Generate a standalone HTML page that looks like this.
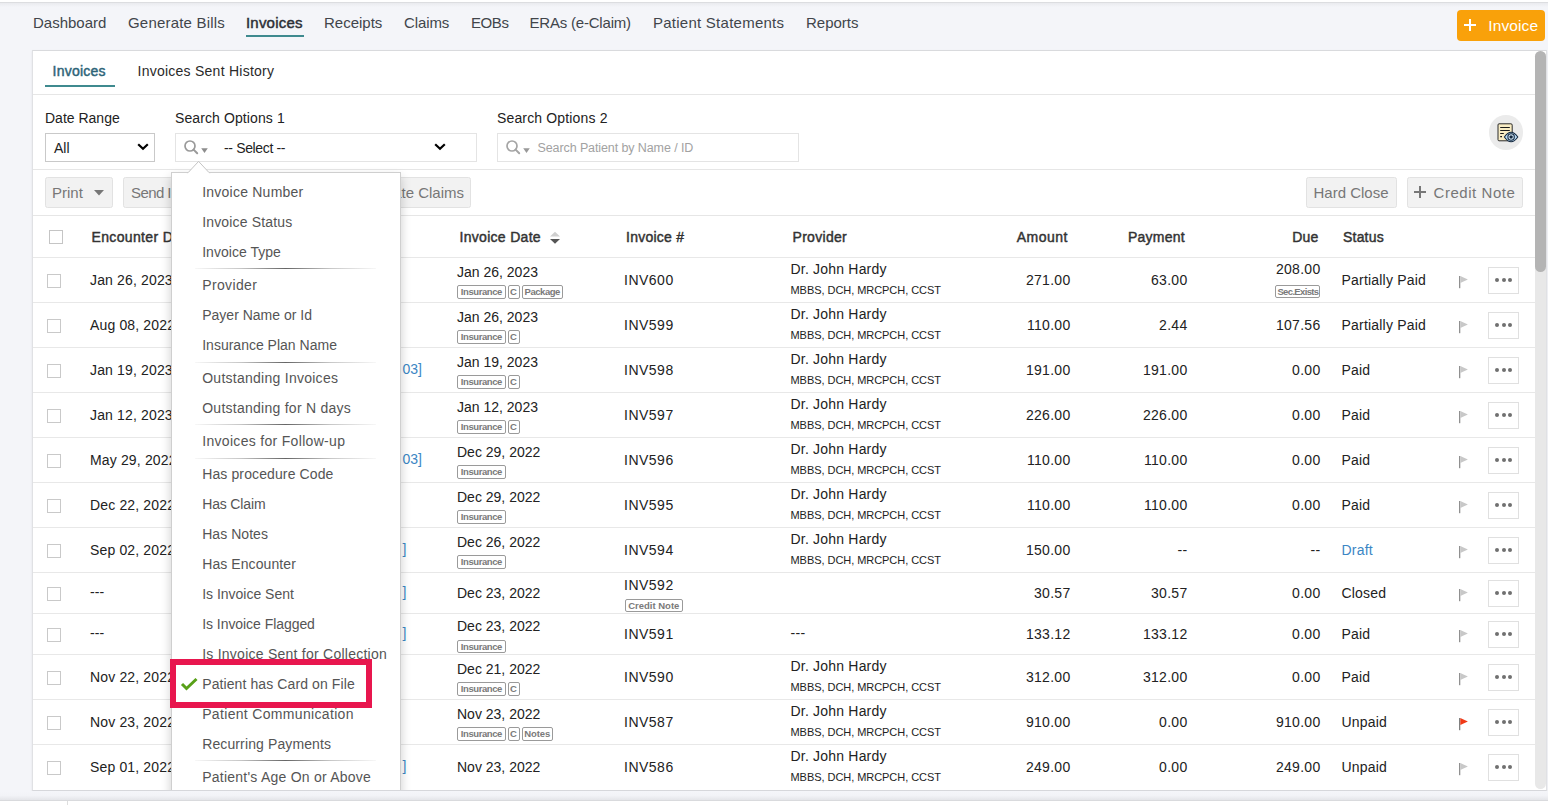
<!DOCTYPE html>
<html><head><meta charset="utf-8"><title>Invoices</title>
<style>
html,body{margin:0;padding:0}
body{width:1548px;height:805px;overflow:hidden;position:relative;background:#f4f5f9;font-family:"Liberation Sans",sans-serif;}
.a{position:absolute}
.t{position:absolute;white-space:nowrap;line-height:1}
.bd{position:absolute;height:13.5px;box-sizing:border-box;border:1px solid #9a9a9a;border-radius:2px;font-size:9.5px;line-height:11.5px;color:#7a7a7a;font-weight:bold;text-align:center;background:#fff;white-space:nowrap;overflow:visible}
</style></head><body>
<div class="a" style="left:0px;top:0px;width:1548px;height:2px;background:#fff"></div>
<div class="a" style="left:0px;top:2px;width:1548px;height:1px;background:#dcdde0"></div>
<div class="a" style="left:0px;top:3px;width:1548px;height:4px;background:linear-gradient(#eaebef,#f4f5f9)"></div>
<div class="t" style="left:33px;top:15.10px;font-size:15px;color:#41454b;font-weight:normal;letter-spacing:0px;">Dashboard</div>
<div class="t" style="left:128px;top:15.10px;font-size:15px;color:#41454b;font-weight:normal;letter-spacing:0.2px;">Generate Bills</div>
<div class="t" style="left:246px;top:15.10px;font-size:15px;color:#2b2f36;font-weight:normal;-webkit-text-stroke:0.45px #2b2f36;letter-spacing:0.2px;">Invoices</div>
<div class="t" style="left:324px;top:15.10px;font-size:15px;color:#41454b;font-weight:normal;letter-spacing:0px;">Receipts</div>
<div class="t" style="left:404px;top:15.10px;font-size:15px;color:#41454b;font-weight:normal;letter-spacing:-0.1px;">Claims</div>
<div class="t" style="left:471px;top:15.10px;font-size:15px;color:#41454b;font-weight:normal;letter-spacing:-0.4px;">EOBs</div>
<div class="t" style="left:529.5px;top:15.10px;font-size:15px;color:#41454b;font-weight:normal;letter-spacing:-0.2px;">ERAs (e-Claim)</div>
<div class="t" style="left:653px;top:15.10px;font-size:15px;color:#41454b;font-weight:normal;letter-spacing:0.25px;">Patient Statements</div>
<div class="t" style="left:806px;top:15.10px;font-size:15px;color:#41454b;font-weight:normal;letter-spacing:0px;">Reports</div>
<div class="a" style="left:246px;top:35px;width:58px;height:2px;background:#3f8a8f"></div>
<div class="a" style="left:1457px;top:10px;width:88px;height:31px;background:#f9a10a;border-radius:4px;"></div>
<div class="a" style="left:1464px;top:24px;width:12px;height:2px;background:#fff"></div>
<div class="a" style="left:1469px;top:19px;width:2px;height:12px;background:#fff"></div>
<div class="t" style="left:1488.3px;top:17.78px;font-size:15.5px;color:#fff;font-weight:normal;letter-spacing:0.1px;">Invoice</div>
<div class="a" style="left:32px;top:50px;width:1515px;height:741px;background:#fff;border:1px solid #e0e1e4;border-top-color:#d9dadd;border-bottom-color:#d6d7db;box-sizing:border-box;box-shadow:0 1px 2px rgba(0,0,0,0.08)"></div>
<div class="t" style="left:52.5px;top:63.75px;font-size:14px;color:#2d6478;font-weight:normal;-webkit-text-stroke:0.45px #2d6478;letter-spacing:0.25px;">Invoices</div>
<div class="t" style="left:137.5px;top:63.75px;font-size:14px;color:#2a2a2a;font-weight:normal;letter-spacing:0.25px;">Invoices Sent History</div>
<div class="a" style="left:45px;top:85px;width:70px;height:2px;background:#3f8a8f"></div>
<div class="a" style="left:33px;top:94px;width:1502px;height:1px;background:#e6e6e6"></div>
<div class="t" style="left:45px;top:111.45px;font-size:14px;color:#222;font-weight:normal;">Date Range</div>
<div class="a" style="left:45px;top:133px;width:110px;height:29px;border:1px solid #c9c9c9;box-sizing:border-box;background:#fff"></div>
<div class="t" style="left:54px;top:141.15px;font-size:14px;color:#222;font-weight:normal;">All</div>
<svg class="a" style="left:136.5px;top:142.8px" width="12" height="8" viewBox="0 0 12 8"><path d="M1.2 1.2 L6 5.8 L10.8 1.2" fill="none" stroke="#000" stroke-width="2.2"/></svg>
<div class="t" style="left:175px;top:111.45px;font-size:14px;color:#222;font-weight:normal;letter-spacing:0.1px;">Search Options 1</div>
<div class="a" style="left:175px;top:133px;width:302px;height:29px;border:1px solid #e4e4e4;box-sizing:border-box;background:#fff"></div>
<svg class="a" style="left:184px;top:140px" width="26" height="16" viewBox="0 0 26 16"><circle cx="6" cy="6" r="5" fill="none" stroke="#9a9a9a" stroke-width="1.7"/><path d="M9.6 9.6 L13.2 13.2" stroke="#9a9a9a" stroke-width="2" stroke-linecap="round"/><path d="M17.2 8.2 L23.8 8.2 L20.5 13 Z" fill="#8d8d8d"/></svg>
<div class="t" style="left:224px;top:141.15px;font-size:14px;color:#222;font-weight:normal;letter-spacing:-0.35px;">-- Select --</div>
<svg class="a" style="left:433.5px;top:142.8px" width="12" height="8" viewBox="0 0 12 8"><path d="M1.2 1.2 L6 5.8 L10.8 1.2" fill="none" stroke="#000" stroke-width="2.2"/></svg>
<div class="t" style="left:497px;top:111.45px;font-size:14px;color:#222;font-weight:normal;letter-spacing:0.15px;">Search Options 2</div>
<div class="a" style="left:497px;top:133px;width:302px;height:29px;border:1px solid #e4e4e4;box-sizing:border-box;background:#fff"></div>
<svg class="a" style="left:506px;top:140px" width="26" height="16" viewBox="0 0 26 16"><circle cx="6" cy="6" r="5" fill="none" stroke="#a5a5a5" stroke-width="1.7"/><path d="M9.6 9.6 L13.2 13.2" stroke="#a5a5a5" stroke-width="2" stroke-linecap="round"/><path d="M17.2 8.2 L23.8 8.2 L20.5 13 Z" fill="#999"/></svg>
<div class="t" style="left:537.5px;top:141.92px;font-size:12.5px;color:#a2a2a2;font-weight:normal;letter-spacing:-0.1px;">Search Patient by Name / ID</div>
<div class="a" style="left:1488.5px;top:115px;width:34.5px;height:34.5px;border-radius:50%;background:#ebebeb"></div>
<svg class="a" style="left:1488px;top:115px" width="36" height="36" viewBox="0 0 36 36">
<path d="M11 8.8 H22.9 Q24.2 8.8 24.2 10.2 V24.7 Q24.2 25.8 22.9 25.8 H11 Q10 25.8 10 24.7 V10 Q10 8.8 11 8.8 Z" fill="#f9edc4" stroke="#2a2a2a" stroke-width="1"/>
<path d="M12.2 12.4 H21.8 M12.2 15.5 H21.8 M12.2 18.5 H15.8 M12.2 21.6 H14" stroke="#1a1a1a" stroke-width="1.05"/>
<path d="M16.4 22 Q23.1 12.4 29.8 22 Q23.1 31.6 16.4 22 Z" fill="#b9dbf6" stroke="#12263d" stroke-width="1.05"/>
<circle cx="23.1" cy="22" r="3.2" fill="#d6eafa" stroke="#12263d" stroke-width="1.1"/>
<rect x="21.6" y="20.5" width="3" height="3" rx="0.8" fill="#12263d"/>
</svg>
<div class="a" style="left:33px;top:169px;width:1502px;height:1px;background:#e6e6e6"></div>
<div class="a" style="left:45px;top:177px;width:68px;height:31px;background:#f2f2f2;border:1px solid #e2e2e2;border-radius:2.5px;box-sizing:border-box"></div>
<div class="t" style="left:52px;top:185.10px;font-size:15px;color:#777;font-weight:normal;">Print</div>
<svg class="a" style="left:93px;top:189px" width="12" height="8" viewBox="0 0 12 8"><path d="M1 1 H11 L6 6.5 Z" fill="#777"/></svg>
<div class="a" style="left:123px;top:177px;width:120px;height:31px;background:#f2f2f2;border:1px solid #e2e2e2;border-radius:2.5px;box-sizing:border-box"></div>
<div class="t" style="left:131px;top:185.10px;font-size:15px;color:#777;font-weight:normal;letter-spacing:-0.6px;">Send Invoices</div>
<div class="a" style="left:250px;top:177px;width:221px;height:31px;background:#f2f2f2;border:1px solid #e2e2e2;border-radius:2.5px;box-sizing:border-box"></div>
<div class="t" style="left:351.5px;top:185.10px;font-size:15px;color:#777;font-weight:normal;letter-spacing:0px;">Generate Claims</div>
<div class="a" style="left:1306px;top:177px;width:91px;height:31px;background:#f2f2f2;border:1px solid #e2e2e2;border-radius:2.5px;box-sizing:border-box"></div>
<div class="t" style="left:1313.5px;top:185.10px;font-size:15px;color:#777;font-weight:normal;">Hard Close</div>
<div class="a" style="left:1407px;top:177px;width:116px;height:31px;background:#f2f2f2;border:1px solid #e2e2e2;border-radius:2.5px;box-sizing:border-box"></div>
<div class="a" style="left:1414px;top:191px;width:12px;height:2px;background:#777"></div>
<div class="a" style="left:1419px;top:186px;width:2px;height:12px;background:#777"></div>
<div class="t" style="left:1433.5px;top:185.10px;font-size:15px;color:#777;font-weight:normal;letter-spacing:0.55px;">Credit Note</div>
<div class="a" style="left:33px;top:215px;width:1502px;height:1px;background:#e6e6e6"></div>
<div class="a" style="left:49px;top:230px;width:14px;height:14px;border:1px solid #c5c5c5;box-sizing:border-box;background:#fff"></div>
<div class="t" style="left:91.5px;top:230.25px;font-size:14px;color:#333;font-weight:normal;-webkit-text-stroke:0.45px #333;letter-spacing:0.35px;">Encounter Date</div>
<div class="t" style="left:459.5px;top:230.25px;font-size:14px;color:#333;font-weight:normal;-webkit-text-stroke:0.45px #333;letter-spacing:0.3px;">Invoice Date</div>
<svg class="a" style="left:549px;top:231px" width="12" height="14" viewBox="0 0 12 14"><path d="M1 5.5 L6 0.8 L11 5.5 Z" fill="#cfcfcf"/><path d="M1 8 L11 8 L6 12.7 Z" fill="#555"/></svg>
<div class="t" style="left:626px;top:230.25px;font-size:14px;color:#333;font-weight:normal;-webkit-text-stroke:0.45px #333;letter-spacing:0.25px;">Invoice #</div>
<div class="t" style="left:792.5px;top:230.25px;font-size:14px;color:#333;font-weight:normal;-webkit-text-stroke:0.45px #333;letter-spacing:0.3px;">Provider</div>
<div class="t" style="right:480px;top:230.25px;font-size:14px;color:#333;font-weight:normal;-webkit-text-stroke:0.45px #333;letter-spacing:0.5px;">Amount</div>
<div class="t" style="right:363px;top:230.25px;font-size:14px;color:#333;font-weight:normal;-webkit-text-stroke:0.45px #333;letter-spacing:0.25px;">Payment</div>
<div class="t" style="right:229.5px;top:230.25px;font-size:14px;color:#333;font-weight:normal;-webkit-text-stroke:0.45px #333;letter-spacing:0.2px;">Due</div>
<div class="t" style="left:1343px;top:230.25px;font-size:14px;color:#333;font-weight:normal;-webkit-text-stroke:0.45px #333;letter-spacing:0.2px;">Status</div>
<div class="a" style="left:33px;top:257px;width:1502px;height:1px;background:#e8e8e8"></div>
<div class="a" style="left:33px;top:302px;width:1502px;height:1px;background:#e8e8e8"></div>
<div class="a" style="left:33px;top:347px;width:1502px;height:1px;background:#e8e8e8"></div>
<div class="a" style="left:33px;top:392px;width:1502px;height:1px;background:#e8e8e8"></div>
<div class="a" style="left:33px;top:437px;width:1502px;height:1px;background:#e8e8e8"></div>
<div class="a" style="left:33px;top:482px;width:1502px;height:1px;background:#e8e8e8"></div>
<div class="a" style="left:33px;top:527px;width:1502px;height:1px;background:#e8e8e8"></div>
<div class="a" style="left:33px;top:572px;width:1502px;height:1px;background:#e8e8e8"></div>
<div class="a" style="left:33px;top:613px;width:1502px;height:1px;background:#e8e8e8"></div>
<div class="a" style="left:33px;top:654px;width:1502px;height:1px;background:#e8e8e8"></div>
<div class="a" style="left:33px;top:699px;width:1502px;height:1px;background:#e8e8e8"></div>
<div class="a" style="left:33px;top:744px;width:1502px;height:1px;background:#e8e8e8"></div>
<div class="a" style="left:47px;top:274px;width:14px;height:14px;border:1px solid #c9c9c9;box-sizing:border-box;background:#fff"></div>
<div class="t" style="left:90px;top:272.85px;font-size:14px;color:#222;font-weight:normal;letter-spacing:0.15px;">Jan 26, 2023</div>
<div class="t" style="left:457px;top:265.15px;font-size:14px;color:#222;font-weight:normal;letter-spacing:0px;">Jan 26, 2023</div>
<div class="bd" style="left:457px;top:285px;width:48.5px;letter-spacing:-0.43px;text-indent:0.21px">Insurance</div><div class="bd" style="left:507.5px;top:285px;width:12px;letter-spacing:0px;text-indent:0.00px">C</div><div class="bd" style="left:521.5px;top:285px;width:41.3px;letter-spacing:-0.46px;text-indent:0.23px">Package</div>
<div class="t" style="left:624px;top:272.85px;font-size:14px;color:#222;font-weight:normal;letter-spacing:0.5px;">INV600</div>
<div class="t" style="left:790.5px;top:262.15px;font-size:14px;color:#222;font-weight:normal;letter-spacing:0.2px;">Dr. John Hardy</div>
<div class="t" style="left:790.5px;top:285.19px;font-size:11px;color:#222;font-weight:normal;letter-spacing:-0.05px;">MBBS, DCH, MRCPCH, CCST</div>
<div class="t" style="right:477.5px;top:272.85px;font-size:14px;color:#222;font-weight:normal;letter-spacing:0.3px;">271.00</div>
<div class="t" style="right:360.5px;top:272.85px;font-size:14px;color:#222;font-weight:normal;letter-spacing:0.3px;">63.00</div>
<div class="t" style="right:227.5px;top:262.45px;font-size:14px;color:#222;font-weight:normal;letter-spacing:0.3px;">208.00</div>
<div class="bd" style="left:1275.2px;top:284.6px;width:45.2px;letter-spacing:-0.65px;text-indent:0.33px">Sec.Exists</div>
<div class="t" style="left:1341.5px;top:272.85px;font-size:14px;color:#222;font-weight:normal;letter-spacing:0.2px;">Partially Paid</div>
<svg class="a" style="left:1458.9px;top:276px" width="10" height="13" viewBox="0 0 10 13"><rect x="0" y="0" width="1.3" height="12.2" fill="#909090"/><path d="M1.3 0 L8.9 3.5 L1.3 7 Z" fill="#c8c8c8"/></svg>
<div class="a" style="left:1488px;top:267px;width:31px;height:27px;border:1px solid #e0e0e0;box-sizing:border-box;background:#fff"></div>
<div class="a" style="left:1495.2px;top:278px;width:4.2px;height:4.2px;border-radius:50%;background:#707070"></div>
<div class="a" style="left:1501.6px;top:278px;width:4.2px;height:4.2px;border-radius:50%;background:#707070"></div>
<div class="a" style="left:1508px;top:278px;width:4.2px;height:4.2px;border-radius:50%;background:#707070"></div>
<div class="a" style="left:47px;top:319px;width:14px;height:14px;border:1px solid #c9c9c9;box-sizing:border-box;background:#fff"></div>
<div class="t" style="left:90px;top:317.85px;font-size:14px;color:#222;font-weight:normal;letter-spacing:0.15px;">Aug 08, 2022</div>
<div class="t" style="left:457px;top:310.15px;font-size:14px;color:#222;font-weight:normal;letter-spacing:0px;">Jan 26, 2023</div>
<div class="bd" style="left:457px;top:330px;width:48.5px;letter-spacing:-0.43px;text-indent:0.21px">Insurance</div><div class="bd" style="left:507.5px;top:330px;width:12px;letter-spacing:0px;text-indent:0.00px">C</div>
<div class="t" style="left:624px;top:317.85px;font-size:14px;color:#222;font-weight:normal;letter-spacing:0.5px;">INV599</div>
<div class="t" style="left:790.5px;top:307.15px;font-size:14px;color:#222;font-weight:normal;letter-spacing:0.2px;">Dr. John Hardy</div>
<div class="t" style="left:790.5px;top:330.19px;font-size:11px;color:#222;font-weight:normal;letter-spacing:-0.05px;">MBBS, DCH, MRCPCH, CCST</div>
<div class="t" style="right:477.5px;top:317.85px;font-size:14px;color:#222;font-weight:normal;letter-spacing:0.3px;">110.00</div>
<div class="t" style="right:360.5px;top:317.85px;font-size:14px;color:#222;font-weight:normal;letter-spacing:0.3px;">2.44</div>
<div class="t" style="right:227.5px;top:317.85px;font-size:14px;color:#222;font-weight:normal;letter-spacing:0.3px;">107.56</div>
<div class="t" style="left:1341.5px;top:317.85px;font-size:14px;color:#222;font-weight:normal;letter-spacing:0.2px;">Partially Paid</div>
<svg class="a" style="left:1458.9px;top:321px" width="10" height="13" viewBox="0 0 10 13"><rect x="0" y="0" width="1.3" height="12.2" fill="#909090"/><path d="M1.3 0 L8.9 3.5 L1.3 7 Z" fill="#c8c8c8"/></svg>
<div class="a" style="left:1488px;top:312px;width:31px;height:27px;border:1px solid #e0e0e0;box-sizing:border-box;background:#fff"></div>
<div class="a" style="left:1495.2px;top:323px;width:4.2px;height:4.2px;border-radius:50%;background:#707070"></div>
<div class="a" style="left:1501.6px;top:323px;width:4.2px;height:4.2px;border-radius:50%;background:#707070"></div>
<div class="a" style="left:1508px;top:323px;width:4.2px;height:4.2px;border-radius:50%;background:#707070"></div>
<div class="a" style="left:47px;top:364px;width:14px;height:14px;border:1px solid #c9c9c9;box-sizing:border-box;background:#fff"></div>
<div class="t" style="left:90px;top:362.85px;font-size:14px;color:#222;font-weight:normal;letter-spacing:0.15px;">Jan 19, 2023</div>
<div class="t" style="right:1126px;top:362.35px;font-size:14px;color:#3b86c4;font-weight:normal;">03]</div>
<div class="t" style="left:457px;top:355.15px;font-size:14px;color:#222;font-weight:normal;letter-spacing:0px;">Jan 19, 2023</div>
<div class="bd" style="left:457px;top:375px;width:48.5px;letter-spacing:-0.43px;text-indent:0.21px">Insurance</div><div class="bd" style="left:507.5px;top:375px;width:12px;letter-spacing:0px;text-indent:0.00px">C</div>
<div class="t" style="left:624px;top:362.85px;font-size:14px;color:#222;font-weight:normal;letter-spacing:0.5px;">INV598</div>
<div class="t" style="left:790.5px;top:352.15px;font-size:14px;color:#222;font-weight:normal;letter-spacing:0.2px;">Dr. John Hardy</div>
<div class="t" style="left:790.5px;top:375.19px;font-size:11px;color:#222;font-weight:normal;letter-spacing:-0.05px;">MBBS, DCH, MRCPCH, CCST</div>
<div class="t" style="right:477.5px;top:362.85px;font-size:14px;color:#222;font-weight:normal;letter-spacing:0.3px;">191.00</div>
<div class="t" style="right:360.5px;top:362.85px;font-size:14px;color:#222;font-weight:normal;letter-spacing:0.3px;">191.00</div>
<div class="t" style="right:227.5px;top:362.85px;font-size:14px;color:#222;font-weight:normal;letter-spacing:0.3px;">0.00</div>
<div class="t" style="left:1341.5px;top:362.85px;font-size:14px;color:#222;font-weight:normal;letter-spacing:0.2px;">Paid</div>
<svg class="a" style="left:1458.9px;top:366px" width="10" height="13" viewBox="0 0 10 13"><rect x="0" y="0" width="1.3" height="12.2" fill="#909090"/><path d="M1.3 0 L8.9 3.5 L1.3 7 Z" fill="#c8c8c8"/></svg>
<div class="a" style="left:1488px;top:357px;width:31px;height:27px;border:1px solid #e0e0e0;box-sizing:border-box;background:#fff"></div>
<div class="a" style="left:1495.2px;top:368px;width:4.2px;height:4.2px;border-radius:50%;background:#707070"></div>
<div class="a" style="left:1501.6px;top:368px;width:4.2px;height:4.2px;border-radius:50%;background:#707070"></div>
<div class="a" style="left:1508px;top:368px;width:4.2px;height:4.2px;border-radius:50%;background:#707070"></div>
<div class="a" style="left:47px;top:409px;width:14px;height:14px;border:1px solid #c9c9c9;box-sizing:border-box;background:#fff"></div>
<div class="t" style="left:90px;top:407.85px;font-size:14px;color:#222;font-weight:normal;letter-spacing:0.15px;">Jan 12, 2023</div>
<div class="t" style="left:457px;top:400.15px;font-size:14px;color:#222;font-weight:normal;letter-spacing:0px;">Jan 12, 2023</div>
<div class="bd" style="left:457px;top:420px;width:48.5px;letter-spacing:-0.43px;text-indent:0.21px">Insurance</div><div class="bd" style="left:507.5px;top:420px;width:12px;letter-spacing:0px;text-indent:0.00px">C</div>
<div class="t" style="left:624px;top:407.85px;font-size:14px;color:#222;font-weight:normal;letter-spacing:0.5px;">INV597</div>
<div class="t" style="left:790.5px;top:397.15px;font-size:14px;color:#222;font-weight:normal;letter-spacing:0.2px;">Dr. John Hardy</div>
<div class="t" style="left:790.5px;top:420.19px;font-size:11px;color:#222;font-weight:normal;letter-spacing:-0.05px;">MBBS, DCH, MRCPCH, CCST</div>
<div class="t" style="right:477.5px;top:407.85px;font-size:14px;color:#222;font-weight:normal;letter-spacing:0.3px;">226.00</div>
<div class="t" style="right:360.5px;top:407.85px;font-size:14px;color:#222;font-weight:normal;letter-spacing:0.3px;">226.00</div>
<div class="t" style="right:227.5px;top:407.85px;font-size:14px;color:#222;font-weight:normal;letter-spacing:0.3px;">0.00</div>
<div class="t" style="left:1341.5px;top:407.85px;font-size:14px;color:#222;font-weight:normal;letter-spacing:0.2px;">Paid</div>
<svg class="a" style="left:1458.9px;top:411px" width="10" height="13" viewBox="0 0 10 13"><rect x="0" y="0" width="1.3" height="12.2" fill="#909090"/><path d="M1.3 0 L8.9 3.5 L1.3 7 Z" fill="#c8c8c8"/></svg>
<div class="a" style="left:1488px;top:402px;width:31px;height:27px;border:1px solid #e0e0e0;box-sizing:border-box;background:#fff"></div>
<div class="a" style="left:1495.2px;top:413px;width:4.2px;height:4.2px;border-radius:50%;background:#707070"></div>
<div class="a" style="left:1501.6px;top:413px;width:4.2px;height:4.2px;border-radius:50%;background:#707070"></div>
<div class="a" style="left:1508px;top:413px;width:4.2px;height:4.2px;border-radius:50%;background:#707070"></div>
<div class="a" style="left:47px;top:454px;width:14px;height:14px;border:1px solid #c9c9c9;box-sizing:border-box;background:#fff"></div>
<div class="t" style="left:90px;top:452.85px;font-size:14px;color:#222;font-weight:normal;letter-spacing:0.15px;">May 29, 2022</div>
<div class="t" style="right:1126px;top:452.35px;font-size:14px;color:#3b86c4;font-weight:normal;">03]</div>
<div class="t" style="left:457px;top:445.15px;font-size:14px;color:#222;font-weight:normal;letter-spacing:0px;">Dec 29, 2022</div>
<div class="bd" style="left:457px;top:465px;width:48.5px;letter-spacing:-0.43px;text-indent:0.21px">Insurance</div>
<div class="t" style="left:624px;top:452.85px;font-size:14px;color:#222;font-weight:normal;letter-spacing:0.5px;">INV596</div>
<div class="t" style="left:790.5px;top:442.15px;font-size:14px;color:#222;font-weight:normal;letter-spacing:0.2px;">Dr. John Hardy</div>
<div class="t" style="left:790.5px;top:465.19px;font-size:11px;color:#222;font-weight:normal;letter-spacing:-0.05px;">MBBS, DCH, MRCPCH, CCST</div>
<div class="t" style="right:477.5px;top:452.85px;font-size:14px;color:#222;font-weight:normal;letter-spacing:0.3px;">110.00</div>
<div class="t" style="right:360.5px;top:452.85px;font-size:14px;color:#222;font-weight:normal;letter-spacing:0.3px;">110.00</div>
<div class="t" style="right:227.5px;top:452.85px;font-size:14px;color:#222;font-weight:normal;letter-spacing:0.3px;">0.00</div>
<div class="t" style="left:1341.5px;top:452.85px;font-size:14px;color:#222;font-weight:normal;letter-spacing:0.2px;">Paid</div>
<svg class="a" style="left:1458.9px;top:456px" width="10" height="13" viewBox="0 0 10 13"><rect x="0" y="0" width="1.3" height="12.2" fill="#909090"/><path d="M1.3 0 L8.9 3.5 L1.3 7 Z" fill="#c8c8c8"/></svg>
<div class="a" style="left:1488px;top:447px;width:31px;height:27px;border:1px solid #e0e0e0;box-sizing:border-box;background:#fff"></div>
<div class="a" style="left:1495.2px;top:458px;width:4.2px;height:4.2px;border-radius:50%;background:#707070"></div>
<div class="a" style="left:1501.6px;top:458px;width:4.2px;height:4.2px;border-radius:50%;background:#707070"></div>
<div class="a" style="left:1508px;top:458px;width:4.2px;height:4.2px;border-radius:50%;background:#707070"></div>
<div class="a" style="left:47px;top:499px;width:14px;height:14px;border:1px solid #c9c9c9;box-sizing:border-box;background:#fff"></div>
<div class="t" style="left:90px;top:497.85px;font-size:14px;color:#222;font-weight:normal;letter-spacing:0.15px;">Dec 22, 2022</div>
<div class="t" style="left:457px;top:490.15px;font-size:14px;color:#222;font-weight:normal;letter-spacing:0px;">Dec 29, 2022</div>
<div class="bd" style="left:457px;top:510px;width:48.5px;letter-spacing:-0.43px;text-indent:0.21px">Insurance</div>
<div class="t" style="left:624px;top:497.85px;font-size:14px;color:#222;font-weight:normal;letter-spacing:0.5px;">INV595</div>
<div class="t" style="left:790.5px;top:487.15px;font-size:14px;color:#222;font-weight:normal;letter-spacing:0.2px;">Dr. John Hardy</div>
<div class="t" style="left:790.5px;top:510.19px;font-size:11px;color:#222;font-weight:normal;letter-spacing:-0.05px;">MBBS, DCH, MRCPCH, CCST</div>
<div class="t" style="right:477.5px;top:497.85px;font-size:14px;color:#222;font-weight:normal;letter-spacing:0.3px;">110.00</div>
<div class="t" style="right:360.5px;top:497.85px;font-size:14px;color:#222;font-weight:normal;letter-spacing:0.3px;">110.00</div>
<div class="t" style="right:227.5px;top:497.85px;font-size:14px;color:#222;font-weight:normal;letter-spacing:0.3px;">0.00</div>
<div class="t" style="left:1341.5px;top:497.85px;font-size:14px;color:#222;font-weight:normal;letter-spacing:0.2px;">Paid</div>
<svg class="a" style="left:1458.9px;top:501px" width="10" height="13" viewBox="0 0 10 13"><rect x="0" y="0" width="1.3" height="12.2" fill="#909090"/><path d="M1.3 0 L8.9 3.5 L1.3 7 Z" fill="#c8c8c8"/></svg>
<div class="a" style="left:1488px;top:492px;width:31px;height:27px;border:1px solid #e0e0e0;box-sizing:border-box;background:#fff"></div>
<div class="a" style="left:1495.2px;top:503px;width:4.2px;height:4.2px;border-radius:50%;background:#707070"></div>
<div class="a" style="left:1501.6px;top:503px;width:4.2px;height:4.2px;border-radius:50%;background:#707070"></div>
<div class="a" style="left:1508px;top:503px;width:4.2px;height:4.2px;border-radius:50%;background:#707070"></div>
<div class="a" style="left:47px;top:544px;width:14px;height:14px;border:1px solid #c9c9c9;box-sizing:border-box;background:#fff"></div>
<div class="t" style="left:90px;top:542.85px;font-size:14px;color:#222;font-weight:normal;letter-spacing:0.15px;">Sep 02, 2022</div>
<div class="t" style="right:1141.5px;top:542.35px;font-size:14px;color:#3b86c4;font-weight:normal;">]</div>
<div class="t" style="left:457px;top:535.15px;font-size:14px;color:#222;font-weight:normal;letter-spacing:0px;">Dec 26, 2022</div>
<div class="bd" style="left:457px;top:555px;width:48.5px;letter-spacing:-0.43px;text-indent:0.21px">Insurance</div>
<div class="t" style="left:624px;top:542.85px;font-size:14px;color:#222;font-weight:normal;letter-spacing:0.5px;">INV594</div>
<div class="t" style="left:790.5px;top:532.15px;font-size:14px;color:#222;font-weight:normal;letter-spacing:0.2px;">Dr. John Hardy</div>
<div class="t" style="left:790.5px;top:555.19px;font-size:11px;color:#222;font-weight:normal;letter-spacing:-0.05px;">MBBS, DCH, MRCPCH, CCST</div>
<div class="t" style="right:477.5px;top:542.85px;font-size:14px;color:#222;font-weight:normal;letter-spacing:0.3px;">150.00</div>
<div class="t" style="right:360.5px;top:542.85px;font-size:14px;color:#222;font-weight:normal;letter-spacing:0.3px;">--</div>
<div class="t" style="right:227.5px;top:542.85px;font-size:14px;color:#222;font-weight:normal;letter-spacing:0.3px;">--</div>
<div class="t" style="left:1341.5px;top:542.85px;font-size:14px;color:#3b86c4;font-weight:normal;letter-spacing:0.2px;">Draft</div>
<svg class="a" style="left:1458.9px;top:546px" width="10" height="13" viewBox="0 0 10 13"><rect x="0" y="0" width="1.3" height="12.2" fill="#909090"/><path d="M1.3 0 L8.9 3.5 L1.3 7 Z" fill="#c8c8c8"/></svg>
<div class="a" style="left:1488px;top:537px;width:31px;height:27px;border:1px solid #e0e0e0;box-sizing:border-box;background:#fff"></div>
<div class="a" style="left:1495.2px;top:548px;width:4.2px;height:4.2px;border-radius:50%;background:#707070"></div>
<div class="a" style="left:1501.6px;top:548px;width:4.2px;height:4.2px;border-radius:50%;background:#707070"></div>
<div class="a" style="left:1508px;top:548px;width:4.2px;height:4.2px;border-radius:50%;background:#707070"></div>
<div class="a" style="left:47px;top:587px;width:14px;height:14px;border:1px solid #c9c9c9;box-sizing:border-box;background:#fff"></div>
<div class="t" style="left:90px;top:585.15px;font-size:14px;color:#222;font-weight:normal;letter-spacing:0.15px;">---</div>
<div class="t" style="right:1141.5px;top:585.35px;font-size:14px;color:#3b86c4;font-weight:normal;">]</div>
<div class="t" style="left:457px;top:585.85px;font-size:14px;color:#222;font-weight:normal;letter-spacing:0px;">Dec 23, 2022</div>
<div class="t" style="left:624px;top:578.15px;font-size:14px;color:#222;font-weight:normal;letter-spacing:0.5px;">INV592</div>
<div class="bd" style="left:625px;top:598.5px;width:57.5px;letter-spacing:0px;text-indent:0.00px">Credit Note</div>
<div class="t" style="right:477.5px;top:585.85px;font-size:14px;color:#222;font-weight:normal;letter-spacing:0.3px;">30.57</div>
<div class="t" style="right:360.5px;top:585.85px;font-size:14px;color:#222;font-weight:normal;letter-spacing:0.3px;">30.57</div>
<div class="t" style="right:227.5px;top:585.85px;font-size:14px;color:#222;font-weight:normal;letter-spacing:0.3px;">0.00</div>
<div class="t" style="left:1341.5px;top:585.85px;font-size:14px;color:#222;font-weight:normal;letter-spacing:0.2px;">Closed</div>
<svg class="a" style="left:1458.9px;top:589px" width="10" height="13" viewBox="0 0 10 13"><rect x="0" y="0" width="1.3" height="12.2" fill="#909090"/><path d="M1.3 0 L8.9 3.5 L1.3 7 Z" fill="#c8c8c8"/></svg>
<div class="a" style="left:1488px;top:580px;width:31px;height:27px;border:1px solid #e0e0e0;box-sizing:border-box;background:#fff"></div>
<div class="a" style="left:1495.2px;top:591px;width:4.2px;height:4.2px;border-radius:50%;background:#707070"></div>
<div class="a" style="left:1501.6px;top:591px;width:4.2px;height:4.2px;border-radius:50%;background:#707070"></div>
<div class="a" style="left:1508px;top:591px;width:4.2px;height:4.2px;border-radius:50%;background:#707070"></div>
<div class="a" style="left:47px;top:628px;width:14px;height:14px;border:1px solid #c9c9c9;box-sizing:border-box;background:#fff"></div>
<div class="t" style="left:90px;top:626.15px;font-size:14px;color:#222;font-weight:normal;letter-spacing:0.15px;">---</div>
<div class="t" style="right:1141.5px;top:626.35px;font-size:14px;color:#3b86c4;font-weight:normal;">]</div>
<div class="t" style="left:457px;top:619.15px;font-size:14px;color:#222;font-weight:normal;letter-spacing:0px;">Dec 23, 2022</div>
<div class="bd" style="left:457px;top:639.5px;width:48.5px;letter-spacing:-0.43px;text-indent:0.21px">Insurance</div>
<div class="t" style="left:624px;top:626.85px;font-size:14px;color:#222;font-weight:normal;letter-spacing:0.5px;">INV591</div>
<div class="t" style="left:790.5px;top:626.15px;font-size:14px;color:#222;font-weight:normal;letter-spacing:0.3px;">---</div>
<div class="t" style="right:477.5px;top:626.85px;font-size:14px;color:#222;font-weight:normal;letter-spacing:0.3px;">133.12</div>
<div class="t" style="right:360.5px;top:626.85px;font-size:14px;color:#222;font-weight:normal;letter-spacing:0.3px;">133.12</div>
<div class="t" style="right:227.5px;top:626.85px;font-size:14px;color:#222;font-weight:normal;letter-spacing:0.3px;">0.00</div>
<div class="t" style="left:1341.5px;top:626.85px;font-size:14px;color:#222;font-weight:normal;letter-spacing:0.2px;">Paid</div>
<svg class="a" style="left:1458.9px;top:630px" width="10" height="13" viewBox="0 0 10 13"><rect x="0" y="0" width="1.3" height="12.2" fill="#909090"/><path d="M1.3 0 L8.9 3.5 L1.3 7 Z" fill="#c8c8c8"/></svg>
<div class="a" style="left:1488px;top:621px;width:31px;height:27px;border:1px solid #e0e0e0;box-sizing:border-box;background:#fff"></div>
<div class="a" style="left:1495.2px;top:632px;width:4.2px;height:4.2px;border-radius:50%;background:#707070"></div>
<div class="a" style="left:1501.6px;top:632px;width:4.2px;height:4.2px;border-radius:50%;background:#707070"></div>
<div class="a" style="left:1508px;top:632px;width:4.2px;height:4.2px;border-radius:50%;background:#707070"></div>
<div class="a" style="left:47px;top:671px;width:14px;height:14px;border:1px solid #c9c9c9;box-sizing:border-box;background:#fff"></div>
<div class="t" style="left:90px;top:669.85px;font-size:14px;color:#222;font-weight:normal;letter-spacing:0.15px;">Nov 22, 2022</div>
<div class="t" style="left:457px;top:662.15px;font-size:14px;color:#222;font-weight:normal;letter-spacing:0px;">Dec 21, 2022</div>
<div class="bd" style="left:457px;top:682px;width:48.5px;letter-spacing:-0.43px;text-indent:0.21px">Insurance</div><div class="bd" style="left:507.5px;top:682px;width:12px;letter-spacing:0px;text-indent:0.00px">C</div>
<div class="t" style="left:624px;top:669.85px;font-size:14px;color:#222;font-weight:normal;letter-spacing:0.5px;">INV590</div>
<div class="t" style="left:790.5px;top:659.15px;font-size:14px;color:#222;font-weight:normal;letter-spacing:0.2px;">Dr. John Hardy</div>
<div class="t" style="left:790.5px;top:682.19px;font-size:11px;color:#222;font-weight:normal;letter-spacing:-0.05px;">MBBS, DCH, MRCPCH, CCST</div>
<div class="t" style="right:477.5px;top:669.85px;font-size:14px;color:#222;font-weight:normal;letter-spacing:0.3px;">312.00</div>
<div class="t" style="right:360.5px;top:669.85px;font-size:14px;color:#222;font-weight:normal;letter-spacing:0.3px;">312.00</div>
<div class="t" style="right:227.5px;top:669.85px;font-size:14px;color:#222;font-weight:normal;letter-spacing:0.3px;">0.00</div>
<div class="t" style="left:1341.5px;top:669.85px;font-size:14px;color:#222;font-weight:normal;letter-spacing:0.2px;">Paid</div>
<svg class="a" style="left:1458.9px;top:673px" width="10" height="13" viewBox="0 0 10 13"><rect x="0" y="0" width="1.3" height="12.2" fill="#909090"/><path d="M1.3 0 L8.9 3.5 L1.3 7 Z" fill="#c8c8c8"/></svg>
<div class="a" style="left:1488px;top:664px;width:31px;height:27px;border:1px solid #e0e0e0;box-sizing:border-box;background:#fff"></div>
<div class="a" style="left:1495.2px;top:675px;width:4.2px;height:4.2px;border-radius:50%;background:#707070"></div>
<div class="a" style="left:1501.6px;top:675px;width:4.2px;height:4.2px;border-radius:50%;background:#707070"></div>
<div class="a" style="left:1508px;top:675px;width:4.2px;height:4.2px;border-radius:50%;background:#707070"></div>
<div class="a" style="left:47px;top:716px;width:14px;height:14px;border:1px solid #c9c9c9;box-sizing:border-box;background:#fff"></div>
<div class="t" style="left:90px;top:714.85px;font-size:14px;color:#222;font-weight:normal;letter-spacing:0.15px;">Nov 23, 2022</div>
<div class="t" style="left:457px;top:707.15px;font-size:14px;color:#222;font-weight:normal;letter-spacing:0px;">Nov 23, 2022</div>
<div class="bd" style="left:457px;top:727px;width:48.5px;letter-spacing:-0.43px;text-indent:0.21px">Insurance</div><div class="bd" style="left:507.5px;top:727px;width:12px;letter-spacing:0px;text-indent:0.00px">C</div><div class="bd" style="left:521.5px;top:727px;width:31.5px;letter-spacing:-0.1px;text-indent:0.05px">Notes</div>
<div class="t" style="left:624px;top:714.85px;font-size:14px;color:#222;font-weight:normal;letter-spacing:0.5px;">INV587</div>
<div class="t" style="left:790.5px;top:704.15px;font-size:14px;color:#222;font-weight:normal;letter-spacing:0.2px;">Dr. John Hardy</div>
<div class="t" style="left:790.5px;top:727.19px;font-size:11px;color:#222;font-weight:normal;letter-spacing:-0.05px;">MBBS, DCH, MRCPCH, CCST</div>
<div class="t" style="right:477.5px;top:714.85px;font-size:14px;color:#222;font-weight:normal;letter-spacing:0.3px;">910.00</div>
<div class="t" style="right:360.5px;top:714.85px;font-size:14px;color:#222;font-weight:normal;letter-spacing:0.3px;">0.00</div>
<div class="t" style="right:227.5px;top:714.85px;font-size:14px;color:#222;font-weight:normal;letter-spacing:0.3px;">910.00</div>
<div class="t" style="left:1341.5px;top:714.85px;font-size:14px;color:#222;font-weight:normal;letter-spacing:0.2px;">Unpaid</div>
<svg class="a" style="left:1458.9px;top:718px" width="10" height="13" viewBox="0 0 10 13"><rect x="0" y="0" width="1.3" height="12.2" fill="#808080"/><path d="M1.3 0 L8.9 3.5 L1.3 7 Z" fill="#f03a17"/></svg>
<div class="a" style="left:1488px;top:709px;width:31px;height:27px;border:1px solid #e0e0e0;box-sizing:border-box;background:#fff"></div>
<div class="a" style="left:1495.2px;top:720px;width:4.2px;height:4.2px;border-radius:50%;background:#707070"></div>
<div class="a" style="left:1501.6px;top:720px;width:4.2px;height:4.2px;border-radius:50%;background:#707070"></div>
<div class="a" style="left:1508px;top:720px;width:4.2px;height:4.2px;border-radius:50%;background:#707070"></div>
<div class="a" style="left:47px;top:761px;width:14px;height:14px;border:1px solid #c9c9c9;box-sizing:border-box;background:#fff"></div>
<div class="t" style="left:90px;top:759.85px;font-size:14px;color:#222;font-weight:normal;letter-spacing:0.15px;">Sep 01, 2022</div>
<div class="t" style="right:1141.5px;top:759.35px;font-size:14px;color:#3b86c4;font-weight:normal;">]</div>
<div class="t" style="left:457px;top:759.85px;font-size:14px;color:#222;font-weight:normal;letter-spacing:0px;">Nov 23, 2022</div>
<div class="t" style="left:624px;top:759.85px;font-size:14px;color:#222;font-weight:normal;letter-spacing:0.5px;">INV586</div>
<div class="t" style="left:790.5px;top:749.15px;font-size:14px;color:#222;font-weight:normal;letter-spacing:0.2px;">Dr. John Hardy</div>
<div class="t" style="left:790.5px;top:772.19px;font-size:11px;color:#222;font-weight:normal;letter-spacing:-0.05px;">MBBS, DCH, MRCPCH, CCST</div>
<div class="t" style="right:477.5px;top:759.85px;font-size:14px;color:#222;font-weight:normal;letter-spacing:0.3px;">249.00</div>
<div class="t" style="right:360.5px;top:759.85px;font-size:14px;color:#222;font-weight:normal;letter-spacing:0.3px;">0.00</div>
<div class="t" style="right:227.5px;top:759.85px;font-size:14px;color:#222;font-weight:normal;letter-spacing:0.3px;">249.00</div>
<div class="t" style="left:1341.5px;top:759.85px;font-size:14px;color:#222;font-weight:normal;letter-spacing:0.2px;">Unpaid</div>
<svg class="a" style="left:1458.9px;top:763px" width="10" height="13" viewBox="0 0 10 13"><rect x="0" y="0" width="1.3" height="12.2" fill="#909090"/><path d="M1.3 0 L8.9 3.5 L1.3 7 Z" fill="#c8c8c8"/></svg>
<div class="a" style="left:1488px;top:754px;width:31px;height:27px;border:1px solid #e0e0e0;box-sizing:border-box;background:#fff"></div>
<div class="a" style="left:1495.2px;top:765px;width:4.2px;height:4.2px;border-radius:50%;background:#707070"></div>
<div class="a" style="left:1501.6px;top:765px;width:4.2px;height:4.2px;border-radius:50%;background:#707070"></div>
<div class="a" style="left:1508px;top:765px;width:4.2px;height:4.2px;border-radius:50%;background:#707070"></div>
<div class="a" style="left:1535px;top:51px;width:11px;height:738px;background:#e8e8e8;border-radius:6px"></div>
<div class="a" style="left:1535px;top:51px;width:11px;height:221px;background:#b4b4b4;border-radius:6px"></div>
<div class="a" style="left:0;top:0;width:1548px;height:790px;overflow:hidden"><div class="a" style="left:171px;top:172px;width:230px;height:640px;background:#fff;border:1px solid #cfcfcf;box-sizing:border-box;box-shadow:0 5px 10px rgba(0,0,0,0.2)"></div><svg class="a" style="left:186px;top:160px" width="26" height="14" viewBox="0 0 26 14"><path d="M1.6 13.2 L12.6 1.4 L23.6 13.2" fill="#fff" stroke="#c4c4c4" stroke-width="1"/><rect x="2.4" y="12.5" width="20.5" height="2" fill="#fff"/></svg><div class="t" style="left:202.2px;top:184.85px;font-size:14px;color:#555;font-weight:normal;letter-spacing:0.231px;">Invoice Number</div><div class="t" style="left:202.2px;top:214.85px;font-size:14px;color:#555;font-weight:normal;letter-spacing:0.169px;">Invoice Status</div><div class="t" style="left:202.2px;top:244.85px;font-size:14px;color:#555;font-weight:normal;letter-spacing:0.027px;">Invoice Type</div><div class="a" style="left:195px;top:268px;width:181px;height:1px;background:linear-gradient(to right, rgba(0,0,0,0.03), rgba(0,0,0,0.22) 25%, rgba(0,0,0,0.6) 50%, rgba(0,0,0,0.22) 75%, rgba(0,0,0,0.03))"></div><div class="t" style="left:202.2px;top:277.85px;font-size:14px;color:#555;font-weight:normal;letter-spacing:0.371px;">Provider</div><div class="t" style="left:202.2px;top:307.85px;font-size:14px;color:#555;font-weight:normal;letter-spacing:0.007px;">Payer Name or Id</div><div class="t" style="left:202.2px;top:337.85px;font-size:14px;color:#555;font-weight:normal;letter-spacing:0.006px;">Insurance Plan Name</div><div class="a" style="left:195px;top:362px;width:181px;height:1px;background:linear-gradient(to right, rgba(0,0,0,0.03), rgba(0,0,0,0.22) 25%, rgba(0,0,0,0.6) 50%, rgba(0,0,0,0.22) 75%, rgba(0,0,0,0.03))"></div><div class="t" style="left:202.2px;top:370.85px;font-size:14px;color:#555;font-weight:normal;letter-spacing:0.263px;">Outstanding Invoices</div><div class="t" style="left:202.2px;top:400.85px;font-size:14px;color:#555;font-weight:normal;letter-spacing:0.262px;">Outstanding for N days</div><div class="a" style="left:195px;top:424px;width:181px;height:1px;background:linear-gradient(to right, rgba(0,0,0,0.03), rgba(0,0,0,0.22) 25%, rgba(0,0,0,0.6) 50%, rgba(0,0,0,0.22) 75%, rgba(0,0,0,0.03))"></div><div class="t" style="left:202.2px;top:433.85px;font-size:14px;color:#555;font-weight:normal;letter-spacing:0.314px;">Invoices for Follow-up</div><div class="a" style="left:195px;top:458px;width:181px;height:1px;background:linear-gradient(to right, rgba(0,0,0,0.03), rgba(0,0,0,0.22) 25%, rgba(0,0,0,0.6) 50%, rgba(0,0,0,0.22) 75%, rgba(0,0,0,0.03))"></div><div class="t" style="left:202.2px;top:466.85px;font-size:14px;color:#555;font-weight:normal;letter-spacing:0.118px;">Has procedure Code</div><div class="t" style="left:202.2px;top:496.85px;font-size:14px;color:#555;font-weight:normal;letter-spacing:-0.15px;">Has Claim</div><div class="t" style="left:202.2px;top:526.85px;font-size:14px;color:#555;font-weight:normal;letter-spacing:0.05px;">Has Notes</div><div class="t" style="left:202.2px;top:556.85px;font-size:14px;color:#555;font-weight:normal;letter-spacing:0.083px;">Has Encounter</div><div class="t" style="left:202.2px;top:586.85px;font-size:14px;color:#555;font-weight:normal;letter-spacing:-0.014px;">Is Invoice Sent</div><div class="t" style="left:202.2px;top:616.85px;font-size:14px;color:#555;font-weight:normal;letter-spacing:-0.053px;">Is Invoice Flagged</div><div class="t" style="left:202.2px;top:646.85px;font-size:14px;color:#555;font-weight:normal;letter-spacing:0.245px;">Is Invoice Sent for Collection</div><div class="t" style="left:202.2px;top:676.85px;font-size:14px;color:#555;font-weight:normal;letter-spacing:0.1px;">Patient has Card on File</div><div class="t" style="left:202.2px;top:706.85px;font-size:14px;color:#555;font-weight:normal;letter-spacing:0.33px;">Patient Communication</div><div class="t" style="left:202.2px;top:736.85px;font-size:14px;color:#555;font-weight:normal;letter-spacing:0.118px;">Recurring Payments</div><div class="a" style="left:195px;top:760px;width:181px;height:1px;background:linear-gradient(to right, rgba(0,0,0,0.03), rgba(0,0,0,0.22) 25%, rgba(0,0,0,0.6) 50%, rgba(0,0,0,0.22) 75%, rgba(0,0,0,0.03))"></div><div class="t" style="left:202.2px;top:769.85px;font-size:14px;color:#555;font-weight:normal;letter-spacing:0.237px;">Patient's Age On or Above</div></div>
<div class="a" style="left:169.5px;top:658.5px;width:202px;height:49.5px;border:6px solid #e8164e;box-sizing:border-box"></div>
<svg class="a" style="left:180px;top:677px" width="19" height="14" viewBox="0 0 19 14"><path d="M2 7 L6.5 11.5 L16.5 2" fill="none" stroke="#58a018" stroke-width="3"/></svg>
<div class="a" style="left:0px;top:791px;width:1548px;height:9px;background:linear-gradient(#f4f5f9 0%,#f2f3f7 50%,#e4e5e9 100%)"></div>
<div class="a" style="left:0px;top:800px;width:1548px;height:1px;background:#d9dadd"></div>
<div class="a" style="left:0px;top:801px;width:1548px;height:4px;background:#fff"></div>
<div class="a" style="left:67px;top:801px;width:1px;height:4px;background:#dedede"></div>
</body></html>
